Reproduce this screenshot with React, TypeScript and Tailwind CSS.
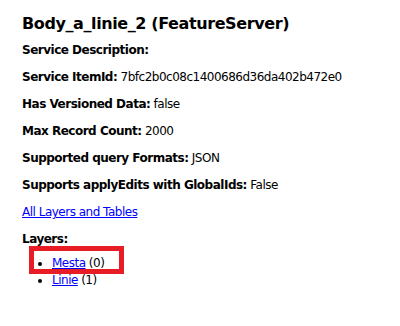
export default function App() {
  const font = { fontFamily: '"DejaVu Sans", Verdana, sans-serif' };
  return (
    <div className="relative bg-white text-black w-[400px] h-[326px] overflow-hidden" style={font}>
      <div className="pl-[22px] pt-[14px] text-[12px] leading-[15px] tracking-[-0.5px]">
        <h2 className="text-[16px] font-bold leading-[20px] mb-[9px] tracking-[-0.4px]">Body_a_linie_2 (FeatureServer)</h2>
        <div className="flex flex-col gap-[12px]">
          <p><b>Service Description:</b> </p>
          <p><b>Service ItemId:</b> 7bfc2b0c08c1400686d36da402b472e0</p>
          <p><b>Has Versioned Data:</b> false</p>
          <p><b>Max Record Count:</b> 2000</p>
          <p><b>Supported query Formats:</b> JSON</p>
          <p><b>Supports applyEdits with GlobalIds:</b> False</p>
          <p><a href="#" className="text-[#0000ff] underline">All Layers and Tables</a></p>
          <div>
            <p><b>Layers:</b></p>
            <ul className="list-disc pl-[30px] mt-[8px] leading-[17px]">
              <li><a href="#" className="text-[#0000ff] underline">Mesta</a> (0)</li>
              <li><a href="#" className="text-[#0000ff] underline">Linie</a> (1)</li>
            </ul>
          </div>
        </div>
      </div>
      <div className="absolute left-[29px] top-[246px] w-[95px] h-[28px] border-[5px] border-[#e81c24]" />
    </div>
  );
}
